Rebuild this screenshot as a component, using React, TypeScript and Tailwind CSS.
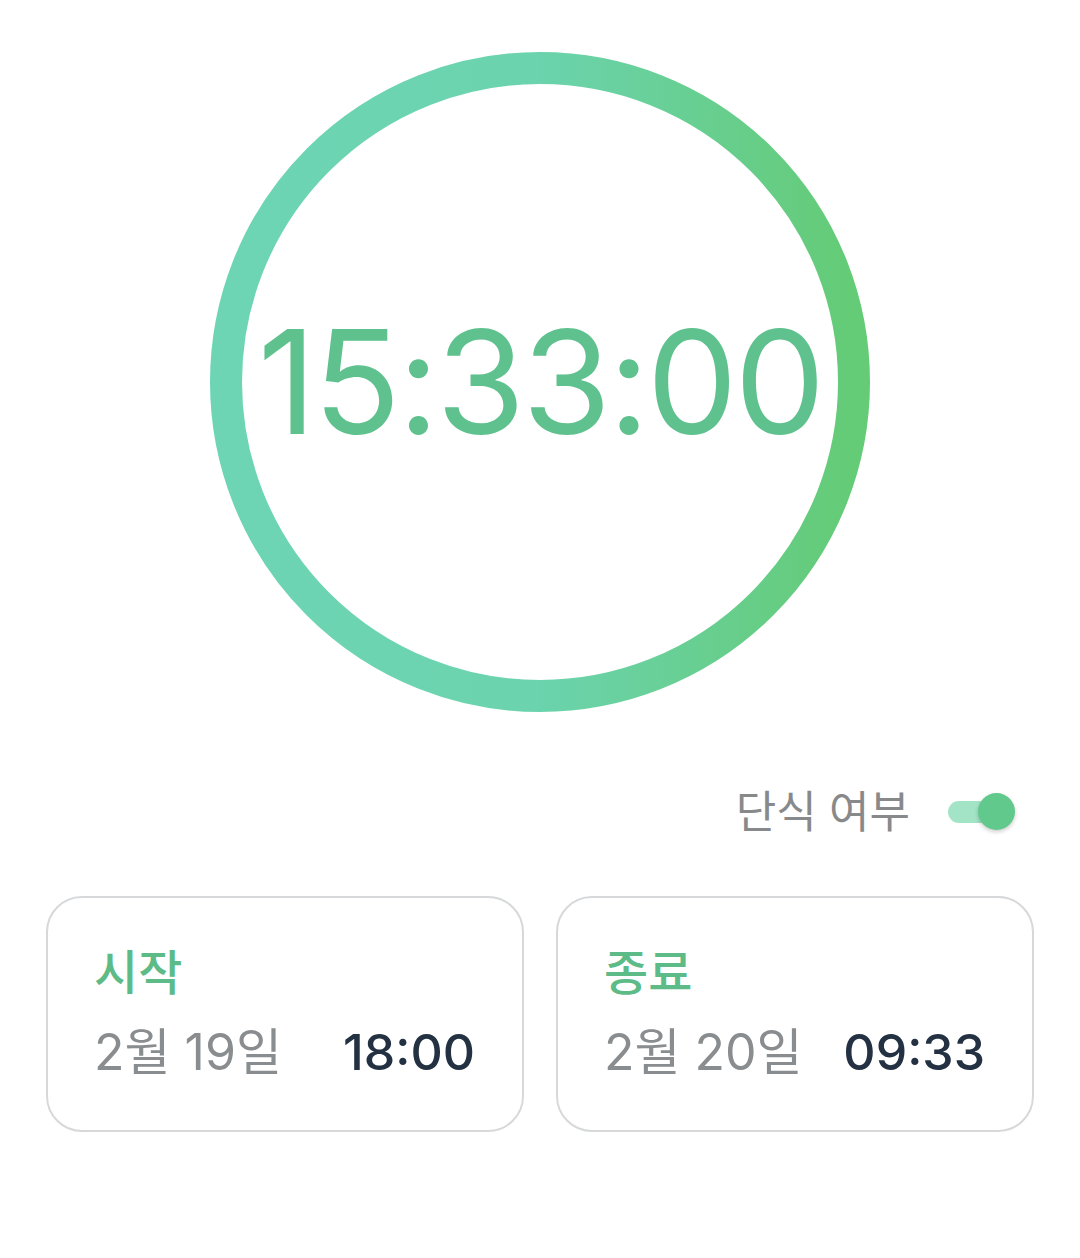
import { useState } from 'react';

const font = { fontFamily: 'Inter, "Noto Sans CJK KR", sans-serif' };

function Ring() {
  return (
    <div className="relative w-[660px] h-[660px]">
      <svg width="660" height="660" viewBox="0 0 660 660" className="absolute inset-0">
        <defs>
          <linearGradient id="ring" x1="0" y1="0" x2="1" y2="0">
            <stop offset="0%" stopColor="#6dd5b4" />
            <stop offset="50%" stopColor="#6bd3ad" />
            <stop offset="100%" stopColor="#64cb76" />
          </linearGradient>
        </defs>
        <circle cx="330" cy="330" r="314" fill="none" stroke="url(#ring)" strokeWidth="32" />
      </svg>
      <div className="absolute inset-0 flex items-center justify-center">
        <span className="text-[144px] leading-none text-[#5fc28e] tracking-[-3px]">15:33:00</span>
      </div>
    </div>
  );
}

function Toggle({ on, onChange }: { on: boolean; onChange: () => void }) {
  return (
    <button onClick={onChange} className="relative w-[62px] h-[38px] flex items-center">
      <span className={`block w-[58px] h-[22px] rounded-full ${on ? 'bg-[#a3e4c7]' : 'bg-gray-300'}`} />
      <span
        className={`absolute top-0 w-[37px] h-[37px] rounded-full shadow-[0_2px_4px_rgba(0,0,0,0.2)] ${
          on ? 'left-[30px] bg-[#62c98c]' : 'left-0 bg-white'
        }`}
      />
    </button>
  );
}

function TimeCard({ title, date, time }: { title: string; date: string; time: string }) {
  return (
    <div className="flex-1 h-[236px] border-2 border-[#d6d8da] rounded-[36px] pl-[46px] pr-[47px] pt-[51px]">
      <div className="text-[48px] leading-none font-medium text-[#5dbb87]">{title}</div>
      <div className="mt-[30px] flex items-center justify-between">
        <span className="text-[50px] leading-none text-[#8a8d8f]">{date}</span>
        <span className="text-[50px] leading-none font-medium text-[#233142]">{time}</span>
      </div>
    </div>
  );
}

export default function App() {
  const [fasting, setFasting] = useState(true);

  return (
    <div className="w-[1080px] h-[1258px] bg-white" style={font}>
      <div className="flex justify-center pt-[52px]">
        <Ring />
      </div>

      {/* fasting toggle */}
      <div className="mt-[78px] flex items-center justify-end gap-[38px] pr-[70px]">
        <span className="text-[44px] leading-none text-[#87898a]">단식 여부</span>
        <Toggle on={fasting} onChange={() => setFasting(!fasting)} />
      </div>

      <div className="mt-[62px] flex gap-8 px-[46px]">
        <TimeCard title="시작" date="2월 19일" time="18:00" />
        <TimeCard title="종료" date="2월 20일" time="09:33" />
      </div>
    </div>
  );
}
